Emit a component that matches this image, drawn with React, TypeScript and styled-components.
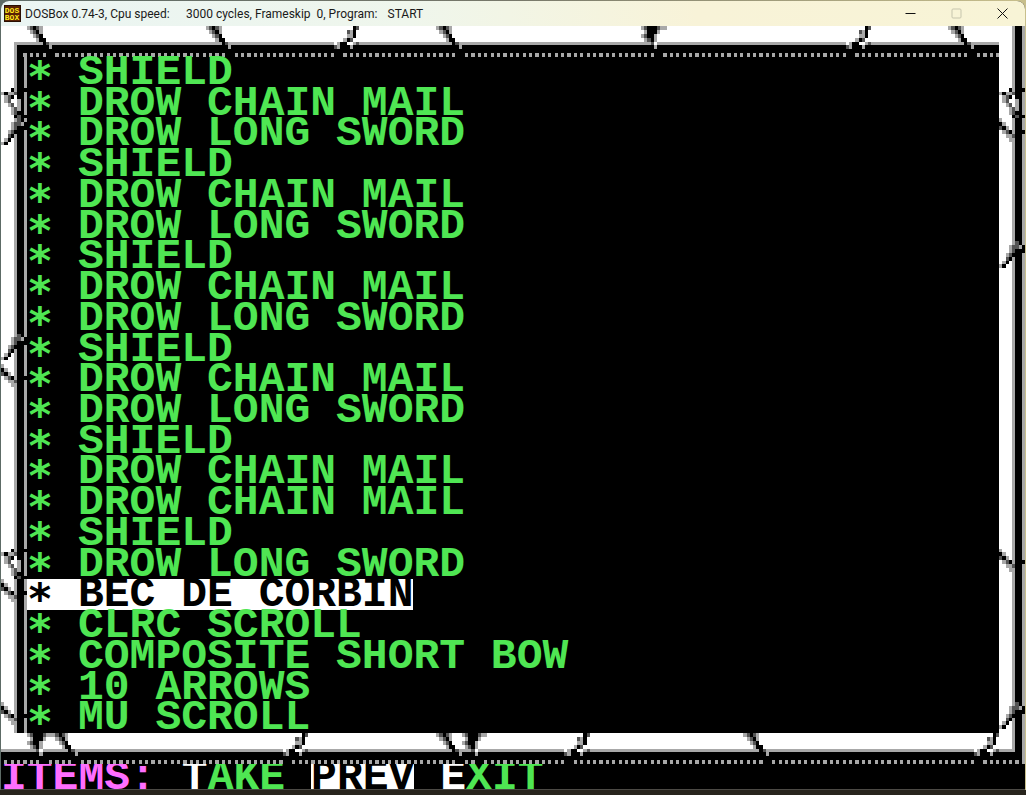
import React from "react";
import styled, { createGlobalStyle } from "styled-components";

const colors = {
  green: "#4fe653",
  magenta: "#ff6eff",
  white: "#ffffff",
  gray: "#a8a8a8",
  dark: "#545454",
  black: "#000000",
};

const Global = createGlobalStyle`
  *, *::before, *::after { box-sizing: border-box; }
  body { margin: 0; background: #28241d; }
`;

const Desktop = styled.div`
  min-height: 100vh;
  display: flex;
  flex-direction: column;
  padding: 1px 1px 0;
  background: linear-gradient(90deg, #5d6b66, #77786a 50%, #c8bf8c);
  border-bottom: 5px solid #28241d;
`;

const Window = styled.main`
  flex: 1;
  display: flex;
  flex-direction: column;
  border-bottom: 1px solid #4b4944;
  border-radius: 8px 8px 0 0;
  overflow: hidden;
  background: ${colors.black};
`;

const TitleBar = styled.header`
  height: 25px;
  flex: none;
  display: flex;
  align-items: center;
  padding-left: 3px;
  background: linear-gradient(90deg, #eaf5f3, #eff6ec 40%, #f8f3d8 68%, #f8f4d6);
  color: #1a1a1a;
  font: 12px/16px Roboto, "Open Sans", sans-serif;
`;

const Title = styled.h1`
  flex: 1;
  display: flex;
  gap: 10px;
  margin: 0;
  padding-left: 4px;
  font: inherit;
  white-space: pre;
`;

const Speed = styled.span`
  min-width: 151px;
`;

const WindowButton = styled.button`
  width: 46px;
  height: 25px;
  display: grid;
  place-items: center;
  padding: 0;
  border: 0;
  background: none;
  color: #111;

  &:disabled {
    color: #c6c5ad;
  }
`;

const Strip = styled.svg`
  display: block;
  width: 100%;
  height: 31px;
  flex: none;
`;

const Middle = styled.div`
  flex: 1;
  display: grid;
  grid-template-columns: 26px 1fr 26px;
`;

const Side = styled.div`
  display: flex;
  height: 0;
  min-height: 100%;

  svg {
    width: 100%;
    height: 100%;
  }
`;

const pixelFont = (lineHeight: number) =>
  `bold 43px/${lineHeight}px "Liberation Mono", "Courier New", monospace`;

const ItemList = styled.ul`
  display: grid;
  grid-auto-rows: minmax(30px, 1fr);
  justify-items: start;
  margin: 0;
  padding: 0;
  list-style: none;
  font: ${pixelFont(32)};
  color: ${colors.green};
`;

const Item = styled.li<{ $selected?: boolean }>`
  display: flex;
  white-space: nowrap;
  color: ${(p) => (p.$selected ? colors.black : colors.green)};
  background: ${(p) => (p.$selected ? colors.white : "transparent")};
`;

const Mark = styled.span`
  width: 51px;
  height: 30px;
  flex: none;
  font-family: "DejaVu Sans Mono", monospace;
  line-height: 40px;
`;

const Name = styled.span`
  height: 30px;
`;

const Menu = styled.nav`
  flex: none;
  height: 25px;
  display: flex;
  gap: 26px;
  overflow: hidden;
  font: ${pixelFont(28)};
  color: ${colors.magenta};
`;

const Command = styled.button<{ $selected?: boolean }>`
  height: 28px;
  padding: 0;
  border: 0;
  font: inherit;
  color: ${(p) => (p.$selected ? colors.black : colors.green)};
  background: ${(p) => (p.$selected ? colors.white : "none")};

  &::first-letter {
    color: ${(p) => (p.$selected ? colors.black : colors.white)};
  }
`;

const fills: Record<string, string> = {
  g: colors.gray,
  d: colors.dark,
  k: colors.black,
  w: colors.white,
};

/* Cracks in the stone frame, one letter per low-resolution pixel. */
const sprites = {
  fall: ["gdkdg...", ".gdkg...", "..gdk...", "...gkk..", ".....kd.", ".......g"],
  rise: ["......kd", "....dgk.", "....ggk.", "...gkd..", "wgkkwwgd", "dg...g.."],
  knot: ["gdkkkdgg", ".gkkkg..", "gdkkg...", ".gdkg...", "..gdw...", "....g..."],
  hook: ["...k...k", "gkggd...", ".gdkw...", ".gdwwg..", "..gdwg..", "...gdg..", "...gdkk.", "....kdkk"],
  sideRise: ["....gd..", "...gddgk", "...gdkkk", "..gdk...", "..dk....", ".gkw....", "gk......"],
  sideFall: ["g.......", "kg......", "dkg.....", ".gdk...k", "..ggd...", "...g...."],
};

type SpriteName = keyof typeof sprites;

function Sprite({ name, x, y = 0 }: { name: SpriteName; x: number; y?: number }) {
  return (
    <g>
      {sprites[name].flatMap((line, row) =>
        [...line].map((c, col) =>
          c === "." ? null : (
            <rect key={`${row}-${col}`} x={x + col} y={y + row} width={1} height={1} fill={fills[c]} />
          ),
        ),
      )}
    </g>
  );
}

type Crack = [SpriteName, number];

const dotGap: Partial<Record<SpriteName, number>> = { fall: 7, rise: 1, knot: 5 };

function Dots({ from, to, cracks }: { from: number; to: number; cracks: Crack[] }) {
  const missing = cracks.map(([name, x]) => x + (dotGap[name] ?? 0));
  const dots: number[] = [];
  for (let x = from; x <= to; x += 2) if (!missing.includes(x)) dots.push(x);
  return (
    <>
      {dots.map((x) => (
        <rect key={x} x={x} y={7} width={1} height={1} fill={colors.gray} />
      ))}
    </>
  );
}

const topCracks: Crack[] = [
  ["fall", 8],
  ["fall", 64],
  ["rise", 104],
  ["fall", 136],
  ["knot", 200],
  ["rise", 264],
  ["fall", 296],
];

const bottomCracks: Crack[] = [
  ["knot", 8],
  ["fall", 16],
  ["rise", 88],
  ["fall", 136],
  ["knot", 144],
  ["rise", 176],
  ["fall", 232],
  ["rise", 304],
];

const leftCracks: Crack[] = [
  ["hook", 8],
  ["sideRise", 16],
  ["sideRise", 72],
  ["sideFall", 80],
  ["hook", 128],
  ["sideFall", 136],
  ["sideFall", 168],
];

const rightCracks: Crack[] = [
  ["hook", 8],
  ["sideFall", 16],
  ["sideRise", 48],
  ["sideFall", 128],
  ["sideRise", 168],
];

function TopFrame() {
  return (
    <Strip viewBox="0 0 320 8" preserveAspectRatio="none" shapeRendering="crispEdges" aria-hidden>
      <rect width={320} height={8} fill={colors.black} />
      <rect width={320} height={4} fill={colors.white} />
      <rect y={4} width={4} height={4} fill={colors.white} />
      <rect x={4} y={4} width={308} height={1} fill={colors.gray} />
      <rect x={4} y={4} width={1} height={4} fill={colors.gray} />
      <rect x={7} y={7} width={1} height={1} fill={colors.gray} />
      <rect x={312} width={4} height={8} fill={colors.white} />
      <rect x={316} width={1} height={8} fill={colors.gray} />
      <rect x={317} width={2} height={8} fill={colors.black} />
      <rect x={319} width={1} height={8} fill={colors.gray} />
      <Dots from={9} to={311} cracks={topCracks} />
      {topCracks.map(([name, x]) => (
        <Sprite key={x} name={name} x={x} />
      ))}
    </Strip>
  );
}

function BottomFrame() {
  return (
    <Strip viewBox="0 0 320 8" preserveAspectRatio="none" shapeRendering="crispEdges" aria-hidden>
      <rect width={320} height={8} fill={colors.black} />
      <rect width={316} height={4} fill={colors.white} />
      <rect y={4} width={317} height={1} fill={colors.gray} />
      <rect x={316} width={1} height={5} fill={colors.gray} />
      <rect x={319} width={1} height={8} fill={colors.gray} />
      <Dots from={1} to={317} cracks={bottomCracks} />
      {bottomCracks.map(([name, x]) => (
        <Sprite key={x} name={name} x={x} />
      ))}
    </Strip>
  );
}

function SideFrame({ cracks }: { cracks: Crack[] }) {
  return (
    <Side>
      <svg viewBox="0 0 8 176" preserveAspectRatio="none" shapeRendering="crispEdges" aria-hidden>
        <rect width={4} height={176} fill={colors.white} />
        <rect x={4} width={1} height={176} fill={colors.gray} />
        <rect x={5} width={2} height={176} fill={colors.black} />
        <rect x={7} width={1} height={176} fill={colors.gray} />
        {cracks.map(([name, y]) => (
          <Sprite key={y} name={name} x={0} y={y} />
        ))}
      </svg>
    </Side>
  );
}

function Logo() {
  return (
    <svg width="17" height="17" viewBox="0 0 17 17" aria-hidden>
      <rect width="17" height="17" fill="#2a0f02" />
      <rect x="1" y="1" width="15" height="15" fill="#5a2204" />
      <g fill="#ffe81a" fontFamily="Liberation Mono, monospace" fontWeight="bold" fontSize="8" textAnchor="middle">
        <text x="8" y="8">DOS</text>
        <text x="8" y="15">BOX</text>
      </g>
    </svg>
  );
}

const items = [
  "SHIELD",
  "DROW CHAIN MAIL",
  "DROW LONG SWORD",
  "SHIELD",
  "DROW CHAIN MAIL",
  "DROW LONG SWORD",
  "SHIELD",
  "DROW CHAIN MAIL",
  "DROW LONG SWORD",
  "SHIELD",
  "DROW CHAIN MAIL",
  "DROW LONG SWORD",
  "SHIELD",
  "DROW CHAIN MAIL",
  "DROW CHAIN MAIL",
  "SHIELD",
  "DROW LONG SWORD",
  "BEC DE CORBIN",
  "CLRC SCROLL",
  "COMPOSITE SHORT BOW",
  "10 ARROWS",
  "MU SCROLL",
];

const selectedItem = 17;

export default function App() {
  return (
    <Desktop>
      <Global />
      <Window>
        <TitleBar>
          <Logo />
          <Title>
            <Speed>DOSBox 0.74-3, Cpu speed:</Speed>
            <span>3000 cycles, Frameskip  0, Program:</span>
            <span>START</span>
          </Title>
          <WindowButton aria-label="Minimize">
            <svg width="11" height="11" viewBox="0 0 11 11">
              <path d="M0.5 5.5h10" stroke="currentColor" fill="none" />
            </svg>
          </WindowButton>
          <WindowButton aria-label="Maximize" disabled>
            <svg width="11" height="11" viewBox="0 0 11 11">
              <rect x="1" y="1" width="9" height="9" rx="1" stroke="currentColor" fill="none" />
            </svg>
          </WindowButton>
          <WindowButton aria-label="Close">
            <svg width="11" height="11" viewBox="0 0 11 11">
              <path d="M0.5 0.5l10 10M10.5 0.5l-10 10" stroke="currentColor" fill="none" />
            </svg>
          </WindowButton>
        </TitleBar>
        <TopFrame />
        <Middle>
          <SideFrame cracks={leftCracks} />
          <ItemList>
            {items.map((name, i) => (
              <Item key={i} $selected={i === selectedItem}>
                <Mark>*</Mark>
                <Name>{name}</Name>
              </Item>
            ))}
          </ItemList>
          <SideFrame cracks={rightCracks} />
        </Middle>
        <BottomFrame />
        <Menu>
          <span>ITEMS:</span>
          <Command>TAKE</Command>
          <Command $selected>PREV</Command>
          <Command>EXIT</Command>
        </Menu>
      </Window>
    </Desktop>
  );
}
